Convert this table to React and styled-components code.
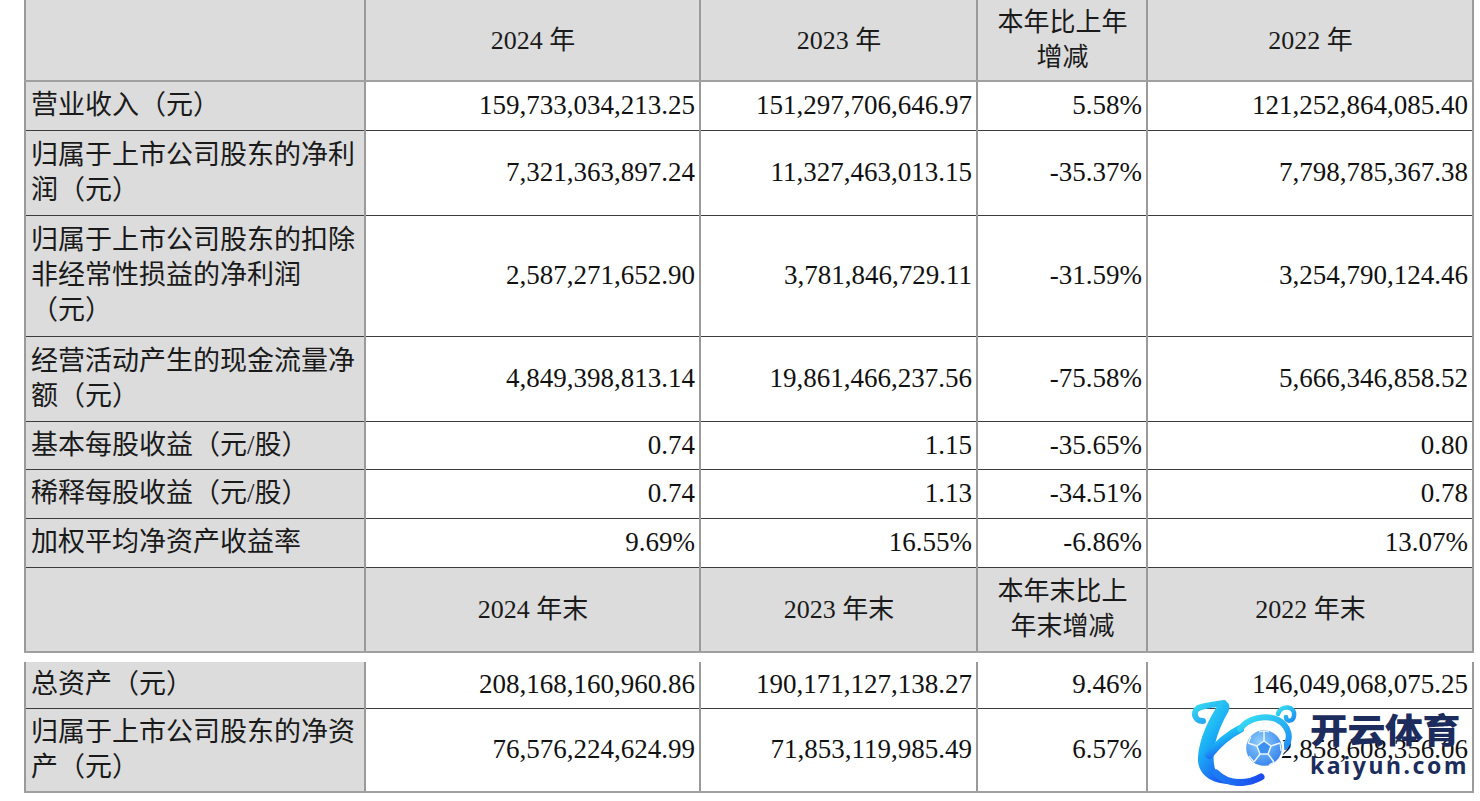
import React from 'react';
import styled, { createGlobalStyle } from 'styled-components';

const GlobalStyle = createGlobalStyle`
  body {
    margin: 0;
    background: #fff;
    font-family: "Liberation Serif", "Noto Sans CJK SC", serif;
    color: #111;
  }
`;

const yearRows = [
  { label: ['营业收入（元）'], h: 49, v: ['159,733,034,213.25', '151,297,706,646.97', '5.58%', '121,252,864,085.40'] },
  { label: ['归属于上市公司股东的净利', '润（元）'], h: 85, v: ['7,321,363,897.24', '11,327,463,013.15', '-35.37%', '7,798,785,367.38'] },
  { label: ['归属于上市公司股东的扣除', '非经常性损益的净利润', '（元）'], h: 121, v: ['2,587,271,652.90', '3,781,846,729.11', '-31.59%', '3,254,790,124.46'] },
  { label: ['经营活动产生的现金流量净', '额（元）'], h: 85, v: ['4,849,398,813.14', '19,861,466,237.56', '-75.58%', '5,666,346,858.52'] },
  { label: ['基本每股收益（元/股）'], h: 48, v: ['0.74', '1.15', '-35.65%', '0.80'] },
  { label: ['稀释每股收益（元/股）'], h: 49, v: ['0.74', '1.13', '-34.51%', '0.78'] },
  { label: ['加权平均净资产收益率'], h: 49, v: ['9.69%', '16.55%', '-6.86%', '13.07%'] },
];

const endRows = [
  { label: ['总资产（元）'], h: 46, v: ['208,168,160,960.86', '190,171,127,138.27', '9.46%', '146,049,068,075.25'] },
  { label: ['归属于上市公司股东的净资', '产（元）'], h: 84, v: ['76,576,224,624.99', '71,853,119,985.49', '6.57%', '62,858,608,356.06'] },
];

function Cols() {
  return (
    <colgroup>
      <col style={{ width: 340 }} />
      <col style={{ width: 335 }} />
      <col style={{ width: 277 }} />
      <col style={{ width: 170 }} />
      <col style={{ width: 326 }} />
    </colgroup>
  );
}

function Lines({ lines }) {
  return lines.map((l, i) => (
    <React.Fragment key={i}>
      {i > 0 && <br />}
      {l}
    </React.Fragment>
  ));
}

function HeadRow({ h, cells }) {
  return (
    <tr>
      <HeadCell $h={h} />
      {cells.map((c, i) => (
        <HeadCell key={i} $h={h}>
          <Lines lines={c} />
        </HeadCell>
      ))}
    </tr>
  );
}

function DataRow({ row, last }) {
  return (
    <tr>
      <LabelCell $h={row.h} $last={last}>
        <Lines lines={row.label} />
      </LabelCell>
      {row.v.map((v, i) => (
        <NumCell key={i} $h={row.h} $last={last}>
          {v}
        </NumCell>
      ))}
    </tr>
  );
}

function Logo() {
  return (
    <LogoSvg width="110" height="88" viewBox="0 0 110 88">
      <defs>
        <linearGradient id="kg" x1="0" y1="0" x2="0.6" y2="1">
          <stop offset="0" stopColor="#3ae8ee" />
          <stop offset="0.5" stopColor="#1aaef6" />
          <stop offset="1" stopColor="#1c56f2" />
        </linearGradient>
        <linearGradient id="kt" x1="0" y1="0" x2="1" y2="0">
          <stop offset="0" stopColor="#1d7cf4" />
          <stop offset="1" stopColor="#1d4bef" />
        </linearGradient>
        <linearGradient id="ks" x1="0" y1="0" x2="1" y2="1">
          <stop offset="0" stopColor="#36e0f2" />
          <stop offset="1" stopColor="#1e8ef5" />
        </linearGradient>
        <radialGradient id="ball" cx="0.4" cy="0.35" r="0.75">
          <stop offset="0" stopColor="#8fd0ff" />
          <stop offset="1" stopColor="#2a78ea" />
        </radialGradient>
      </defs>
      <path d="M15 23 C5 23 4 11 13 9 C21 7 28 6 36 5" fill="none" stroke="url(#ks)" strokeWidth="6" strokeLinecap="round" />
      <path d="M32 4 C41 1 44 9 39 16 C30 32 24 50 26 66 C27 76 34 80 45 81 L40 86 C21 85 9 75 10 59 C11 42 20 21 32 4 Z" fill="url(#kg)" />
      <path d="M28 75 C40 87 58 87 73 79" fill="none" stroke="url(#kt)" strokeWidth="7" strokeLinecap="round" />
      <path d="M21 57 C30 46 40 37 52 31" fill="none" stroke="url(#kg)" strokeWidth="8" strokeLinecap="round" />
      <path d="M52 31 C60 20 78 16 90 22 C101 28 104 40 97 49" fill="none" stroke="url(#ks)" strokeWidth="6" strokeLinecap="round" />
      <path d="M90 16 C93 6 108 8 106 18 C105 24 98 24 98 19" fill="none" stroke="url(#ks)" strokeWidth="4.5" strokeLinecap="round" />
      <circle cx="76" cy="50" r="19" fill="url(#ball)" stroke="#fff" strokeWidth="2.5" />
      <path d="M76 43 L83 48 L80 56 L72 56 L69 48 Z" fill="#3d8ff0" stroke="#eaf5ff" strokeWidth="1.5" />
      <path d="M76 43 L76 33 M83 48 L92 45 M80 56 L86 64 M72 56 L66 64 M69 48 L60 45" stroke="#eaf5ff" strokeWidth="1.5" />
      <path d="M71 34 L76 33 L81 34 M92 45 L93 53 M86 64 L81 67 M66 64 L61 58 M60 45 L63 39" stroke="#eaf5ff" strokeWidth="1.2" fill="none" />
    </LogoSvg>
  );
}

function Watermark() {
  return (
    <Mark>
      <Logo />
      <MarkText>
        <Brand>开云体育</Brand>
        <Domain>kaiyun.com</Domain>
      </MarkText>
    </Mark>
  );
}

export default function App() {
  return (
    <Page>
      <GlobalStyle />
      <Table>
        <Cols />
        <tbody>
          <HeadRow h={81} cells={[['2024 年'], ['2023 年'], ['本年比上年', '增减'], ['2022 年']]} />
          {yearRows.map((r, i) => (
            <DataRow key={i} row={r} />
          ))}
          <HeadRow h={85} cells={[['2024 年末'], ['2023 年末'], ['本年末比上', '年末增减'], ['2022 年末']]} />
        </tbody>
      </Table>
      <Table $gap>
        <Cols />
        <tbody>
          {endRows.map((r, i) => (
            <DataRow key={i} row={r} last={i === endRows.length - 1} />
          ))}
        </tbody>
      </Table>
      <Watermark />
    </Page>
  );
}

const Page = styled.div`
  position: relative;
  padding-left: 24px;
  width: 1448px;
  height: 801px;
`;

const Table = styled.table`
  border-collapse: collapse;
  table-layout: fixed;
  width: 1448px;
  margin-top: ${(p) => (p.$gap ? '9px' : '0')};
  font-size: 27px;
  line-height: 35px;
`;

const Cell = styled.td`
  height: ${(p) => p.$h}px;
  padding: 0 4px 0 5px;
  border-left: 2px solid #9a9a9a;
  border-right: 2px solid #9a9a9a;
  vertical-align: middle;
  box-sizing: border-box;
  white-space: nowrap;
`;

const HeadCell = styled(Cell)`
  background: #dcdcdc;
  text-align: center;
  border-bottom: 2px solid #a0a0a0;
  font-weight: 400;
  font-size: 26px;
  color: #1a1a1a;
`;

const LabelCell = styled(Cell)`
  background: #dcdcdc;
  text-align: left;
  color: #1a1a1a;
  border-bottom: ${(p) => (p.$last ? '2px solid #a0a0a0' : '1px solid #3c3c3c')};
`;

const NumCell = styled(Cell)`
  background: #fff;
  text-align: right;
  border-bottom: ${(p) => (p.$last ? '2px solid #a0a0a0' : '1px solid #3c3c3c')};
`;

const Mark = styled.div`
  position: absolute;
  left: 1188px;
  top: 698px;
  width: 292px;
  display: flex;
  align-items: flex-start;
  gap: 12px;
`;

const LogoSvg = styled.svg`
  flex-shrink: 0;
  display: block;
`;

const MarkText = styled.div`
  display: flex;
  flex-direction: column;
  padding-top: 15px;
`;

const Brand = styled.div`
  font-family: "Noto Sans CJK SC", sans-serif;
  font-weight: 900;
  font-size: 38px;
  line-height: 34px;
  color: #1c2c5c;
  letter-spacing: -0.5px;
  white-space: nowrap;
  transform: scaleY(0.9);
  transform-origin: top left;
`;

const Domain = styled.div`
  font-family: "Noto Sans", sans-serif;
  font-weight: 700;
  font-size: 23px;
  line-height: 28px;
  color: #1c2c5c;
  letter-spacing: 2.6px;
  white-space: nowrap;
  margin-top: 4px;
`;
